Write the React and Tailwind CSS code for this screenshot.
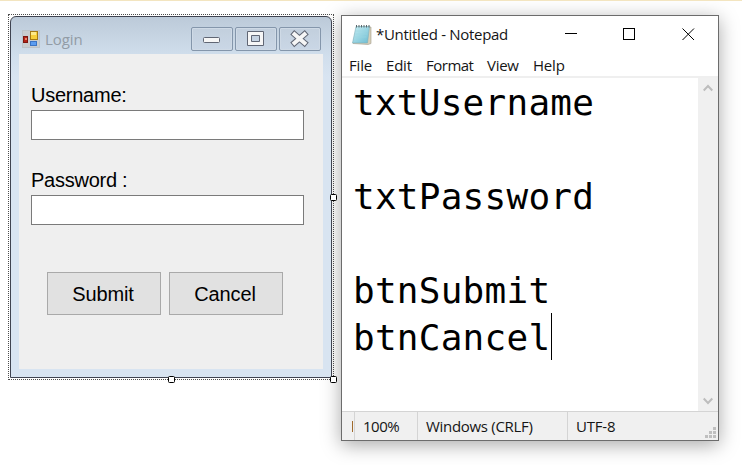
import React from 'react';

const ui = "font-['Open_Sans','Noto_Sans',sans-serif]";

function FormIcon() {
  return (
    <svg width="18" height="18" viewBox="0 0 18 18" className="shrink-0">
      <rect x="0.5" y="0.5" width="17" height="17" fill="#c9cdd0" stroke="#bcc3c9" />
      <rect x="1.5" y="6.5" width="4" height="6" fill="#b42318" stroke="#7d1710" />
      <rect x="3" y="8" width="2" height="2" fill="#ec8266" />
      <rect x="8.5" y="1.5" width="7" height="8" fill="#f7cf3a" stroke="#a67a14" />
      <rect x="9" y="2" width="5" height="3" fill="#fde98a" />
      <rect x="8.5" y="11.5" width="6" height="4" fill="#5b9cf0" stroke="#3b74c4" />
    </svg>
  );
}

function GlassButton({ children }) {
  return (
    <div className="w-[42px] h-6 rounded-[2px] border border-[#8496ab] bg-gradient-to-b from-[#c2cfdd] to-[#cad7e6] shadow-[inset_0_0_0_1px_#cfdae6] flex">
      <svg width="40" height="22" viewBox="0 0 40 22" className="shrink-0">{children}</svg>
    </div>
  );
}

function Field({ label, spacing }) {
  return (
    <div className="flex flex-col">
      <label className={`text-[20px] leading-[30px] h-[30px] whitespace-nowrap text-black ${spacing}`}>{label}</label>
      <div className="w-[273px] h-[30px] border border-[#7a7a7a] bg-white" />
    </div>
  );
}

function Handle({ place }) {
  return <span className={`absolute size-[7px] rounded-[1.5px] border border-black bg-white ${place}`} />;
}

function LoginForm() {
  return (
    <div className="relative z-10 w-[326px] h-[366px] border border-dotted border-[#4d4d4d] p-px font-['Liberation_Sans',Arial,sans-serif]">
      <div className="w-[322px] h-[362px] rounded-t-[6px] border border-[#3f4350] bg-[linear-gradient(#bccad9,#d0deec_38px,#d8e4f1_60px)] px-2 flex flex-col">
        <div className="h-[37px] shrink-0 flex pl-[3px]">
          <div className="pt-[13px] flex">
            <FormIcon />
            <span className={`${ui} ml-[5px] text-[15px] leading-[19px] tracking-[-0.1px] text-[#929ca6]`}>Login</span>
          </div>
          <div className="ml-auto mr-[2px] pt-[10px] flex gap-[2px]">
            <GlassButton>
              <rect x="11.5" y="9.5" width="16" height="5" rx="1" fill="#f6f6f6" stroke="#606674" />
            </GlassButton>
            <GlassButton>
              <path d="M11.5 3.500h16v14h-16zM15.500 7.500h8v6h-8z" fillRule="evenodd" fill="#f6f6f6" stroke="#606674" strokeLinejoin="round" />
            </GlassButton>
            <GlassButton>
              <g strokeLinecap="square" fill="none">
                <path d="M14.500 6.300l10 8.600M24.500 6.300l-10 8.600" stroke="#606674" strokeWidth="6" />
                <path d="M14.500 6.300l10 8.600M24.500 6.300l-10 8.600" stroke="#f6f6f6" strokeWidth="4" />
              </g>
            </GlassButton>
          </div>
        </div>
        <div className="w-[304px] h-[315px] bg-[#efefef] pt-[26px] pl-3">
          <Field label="Username:" spacing="tracking-[-0.25px]" />
          <div className="mt-[25px]">
            <Field label="Password :" spacing="tracking-[-0.25px]" />
          </div>
          <div className="mt-[47px] ml-4 flex gap-2">
            <button className="w-[114px] h-[43px] border border-[#a9a9a9] bg-[#e1e1e1] text-[20px] leading-5 pr-[2px] tracking-[-0.1px]">Submit</button>
            <button className="w-[114px] h-[43px] border border-[#a9a9a9] bg-[#e1e1e1] text-[20px] leading-5 pr-[2px] tracking-[-0.1px]">Cancel</button>
          </div>
        </div>
      </div>
      <Handle place="left-[159px] top-[361px]" />
      <Handle place="left-[321px] top-[361px]" />
      <Handle place="left-[321px] top-[179px]" />
    </div>
  );
}

function NotepadIcon() {
  return (
    <svg width="20" height="21" viewBox="0 0 20 21" className="shrink-0">
      <defs>
        <linearGradient id="sheet" x1="0" y1="0" x2="1" y2="1">
          <stop offset="0" stopColor="#c7edf3" />
          <stop offset="1" stopColor="#6dbdd2" />
        </linearGradient>
      </defs>
      <path d="M5 3h14v16.500l-3 1-15-1z" fill="#d8cfb8" stroke="#a39d8e" strokeWidth=".6" />
      <path d="M4 2.500h13.500l-2 16.500h-15z" fill="url(#sheet)" stroke="#80aebb" strokeWidth=".6" />
      <path d="M4.500 1v2.500M7 1v2.500M9.500 1v2.500M12 1v2.500M14.500 1v2.500M17 1v2.500" stroke="#59676b" strokeWidth="1" />
      <path d="M3.500 7h12M3 10h12M2.500 13h12" stroke="#9bd6e1" strokeWidth=".6" />
    </svg>
  );
}

function Notepad() {
  return (
    <div className={`w-[378px] h-[426px] border border-[#6c6c6c] bg-white shadow-[0_4px_18px_rgba(0,0,0,0.34)] flex flex-col text-[15px] text-[#151515] ${ui}`}>
      <div className="h-[36px] shrink-0 flex items-center pl-[10px]">
        <NotepadIcon />
        <span className="ml-1 whitespace-nowrap tracking-[-0.3px]">*Untitled - Notepad</span>
        <svg width="130" height="14" viewBox="0 0 130 14" className="ml-auto mr-[23px] shrink-0" fill="none" stroke="#000">
          <path d="M0 6.500h12" />
          <rect x="58.500" y="1.500" width="11" height="11" />
          <path d="M117.500 1.500l11.500 11.500M129 1.500l-11.500 11.500" />
        </svg>
      </div>
      <div className="h-[24px] shrink-0 flex items-center pl-[7px] pt-px leading-[20px]">
        <span className="w-[37px] tracking-[-0.2px]">File</span>
        <span className="w-10 tracking-[-0.2px]">Edit</span>
        <span className="w-[61px] tracking-[-0.5px]">Format</span>
        <span className="w-[46px] tracking-[-0.3px]">View</span>
        <span className="tracking-[-0.2px]">Help</span>
      </div>
      <div className="flex h-[335px] shrink-0 border-t-2 border-[#efefef]">
        <div className="flex-1 pl-[11px] font-['DejaVu_Sans_Mono',monospace] text-[36px] tracking-[0.250px] leading-[49px] text-black">
          <div className="h-[47px]">txtUsername</div>
          <div className="h-[47px]" />
          <div className="h-[47px]">txtPassword</div>
          <div className="h-[47px]" />
          <div className="h-[47px]">btnSubmit</div>
          <div className="h-[47px] flex">
            btnCancel
            <span className="w-px h-[47px] bg-black ml-px" />
          </div>
        </div>
        <div className="w-5 bg-[#f0f0f0] flex flex-col justify-between items-center pt-[6px] pb-[6px]">
          <svg width="10" height="8" viewBox="0 0 10 8" fill="none" stroke="#bdbdbd" strokeWidth="2"><path d="M.7 6.500 5 2l4.300 4.500" /></svg>
          <svg width="10" height="8" viewBox="0 0 10 8" fill="none" stroke="#bdbdbd" strokeWidth="2"><path d="M.7 1.500 5 6l4.300-4.500" /></svg>
        </div>
      </div>
      <div className="flex-1 flex border-t border-[#d4d4d4] bg-[#f0f0f0] leading-[28px] whitespace-nowrap">
        <div className="w-[13px] border-r border-[#d4d4d4] flex items-center justify-end">
          <span className="w-px h-[11px] mr-px bg-[#a06a2c]" />
        </div>
        <div className="w-[63px] border-r border-[#d4d4d4] pl-2 tracking-[-0.5px]">100%</div>
        <div className="w-[150px] border-r border-[#d4d4d4] pl-2 tracking-[-0.3px]">Windows (CRLF)</div>
        <div className="pl-2 tracking-[-0.2px]">UTF-8</div>
        <svg width="11" height="11" viewBox="0 0 11 11" className="ml-auto mr-[2px] self-end mb-[2px]" fill="#bfbfbf">
          <path d="M8 0h3v3h-3zM8 4h3v3h-3zM8 8h3v3h-3zM4 4h3v3h-3zM4 8h3v3h-3zM0 8h3v3h-3z" />
        </svg>
      </div>
    </div>
  );
}

export default function App() {
  return (
    <div className="w-[742px] h-[465px] overflow-hidden bg-white border-t border-[#f3e5c0]">
      <div className="flex items-start pl-2">
        <div className="pt-[13px] shrink-0">
          <LoginForm />
        </div>
        <div className="pt-[14px] pl-[7px] shrink-0">
          <Notepad />
        </div>
      </div>
    </div>
  );
}
